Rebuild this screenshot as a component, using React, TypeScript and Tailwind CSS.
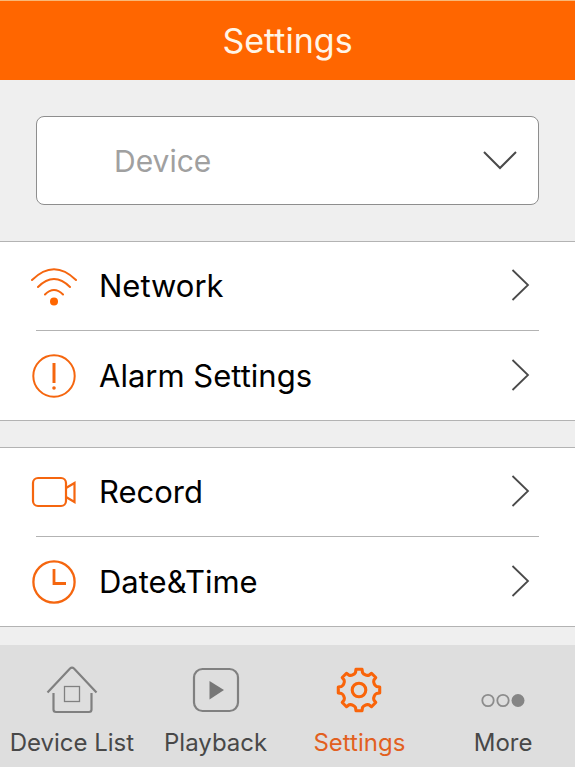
import type { ReactNode } from 'react';

const TOOTH_ANGLES = [0, 45, 90, 135, 180, 225, 270, 315];

function rotated(x: number, y: number, degrees: number) {
  const a = (degrees * Math.PI) / 180;
  const px = x * Math.cos(a) - y * Math.sin(a);
  const py = x * Math.sin(a) + y * Math.cos(a);
  return `${px.toFixed(2)} ${py.toFixed(2)}`;
}

// Each tooth is a flat cap, followed by a rounded valley leading to the next one.
const GEAR_PATH =
  TOOTH_ANGLES.map((angle, i) =>
    [
      `${i === 0 ? 'M' : 'L'}${rotated(-3, -20.7, angle)}`,
      `L${rotated(3, -20.7, angle)}`,
      `L${rotated(3.5, -17.5, angle)}`,
      `Q${rotated(4.4, -15.8, angle)} ${rotated(6.3, -15.2, angle)}`,
      `Q${rotated(-4.4, -15.8, angle + 45)} ${rotated(-3.5, -17.5, angle + 45)}`,
    ].join(' '),
  ).join(' ') + 'Z';

function WifiIcon() {
  return (
    <svg viewBox="0 0 48 48" className="size-12 shrink-0" fill="none" stroke="#f5660f" strokeWidth="2" strokeLinecap="round" aria-hidden="true">
      <path d="M2 18Q24-3.5 46 18M8 25Q24 9 40 25M15 32.5Q24 23.5 33 32.5" />
      <circle cx="24" cy="39.5" r="4" fill="#ff6600" stroke="none" />
    </svg>
  );
}

function AlarmIcon() {
  return (
    <svg viewBox="0 0 48 48" className="size-12 shrink-0" fill="none" stroke="#f5660f" strokeWidth="2" aria-hidden="true">
      <circle cx="24" cy="24" r="20.7" />
      <path d="M24 11V31" strokeWidth="3" />
      <circle cx="24" cy="36" r="1.8" fill="#f5660f" stroke="none" />
    </svg>
  );
}

function RecordIcon() {
  return (
    <svg viewBox="0 0 48 48" className="size-12 shrink-0" fill="none" stroke="#f5660f" strokeWidth="2.2" aria-hidden="true">
      <rect x="3" y="10" width="33" height="28" rx="5" />
      <path d="M36 20L44.5 15V34L36 29" />
    </svg>
  );
}

function ClockIcon() {
  return (
    <svg viewBox="0 0 48 48" className="size-12 shrink-0" fill="none" stroke="#f5660f" strokeWidth="2.3" aria-hidden="true">
      <circle cx="24" cy="24" r="20.6" />
      <path d="M24 11V25.5H36" strokeWidth="2.8" />
    </svg>
  );
}

function HomeIcon() {
  return (
    <svg viewBox="0 0 52 48" className="h-12 w-13" fill="none" stroke="#808080" strokeWidth="2.2" aria-hidden="true">
      <path d="M1.5 26.5L24 2.5Q26 .8 28 2.5L50.5 26.5" />
      <path d="M7.5 27V43.5Q7.5 46 10 46H43Q45.5 46 45.5 43.5V27" />
      <rect x="18.5" y="20.5" width="15" height="15" strokeWidth="1.3" />
    </svg>
  );
}

function PlaybackIcon() {
  return (
    <svg viewBox="0 0 48 48" className="size-12" fill="none" stroke="#808080" strokeWidth="2.2" aria-hidden="true">
      <rect x="2" y="3" width="44" height="42" rx="8.5" />
      <path d="M17.5 15L32 24L17.5 33.5Z" fill="#777777" stroke="none" />
    </svg>
  );
}

function GearIcon() {
  return (
    <svg viewBox="-24 -24 48 48" className="size-12" fill="none" stroke="#f9640a" strokeWidth="3.1" strokeLinejoin="round" aria-hidden="true">
      <path d={GEAR_PATH} />
      <circle r="6.8" />
    </svg>
  );
}

function MoreIcon() {
  return (
    <svg viewBox="0 0 48 48" className="size-12" fill="none" stroke="#8c8c8c" strokeWidth="1.8" aria-hidden="true">
      <circle cx="9" cy="34.5" r="5.7" />
      <circle cx="24" cy="34.5" r="5.7" />
      <circle cx="39" cy="34.5" r="6.5" fill="#858585" stroke="none" />
    </svg>
  );
}

function SettingRow({ icon, label }: { icon: ReactNode; label: string }) {
  return (
    <li className="px-9 not-last:[&>button]:border-b">
      <button type="button" className="flex h-[89px] w-full items-center border-[#b3b3b3] text-left">
        <span className="-ml-1.5 mr-[21px]">{icon}</span>
        <span className="grow text-[31px] leading-10 text-black">{label}</span>
        <svg viewBox="0 0 20 34" className="mr-[9px] h-[34px] w-5" fill="none" stroke="#4a4a4a" strokeWidth="1.8" aria-hidden="true">
          <path d="M2.5 1L18 16L2.5 31" />
        </svg>
      </button>
    </li>
  );
}

function Tab({ icon, label, active = false }: { icon: ReactNode; label: string; active?: boolean }) {
  return (
    <button
      type="button"
      aria-current={active ? 'page' : undefined}
      className={`flex flex-col items-center gap-[15px] whitespace-nowrap text-2xl leading-7 ${active ? 'text-[#e2601f]' : 'text-[#484848]'}`}
    >
      {icon}
      <span>{label}</span>
    </button>
  );
}

export default function App() {
  return (
    <div className="flex min-h-screen flex-col bg-white pr-px pb-px font-[Inter,'Liberation_Sans',sans-serif]">
      <header className="flex h-20 items-center justify-center border-t border-[#f8b878] bg-[#ff6600]">
        <h1 className="text-[34px] leading-10 text-[#fff5e8]">Settings</h1>
      </header>
      <main className="flex grow flex-col bg-[#efefef]">
        <div className="relative mx-9 my-9">
          <select
            aria-label="Device"
            defaultValue=""
            className="h-[89px] w-full appearance-none rounded-lg border border-[#8e8e8e] bg-white px-[77px] pt-0.5 text-[30px] text-[#a0a0a0]"
          >
            <option value="">Device</option>
          </select>
          <svg viewBox="0 0 36 20" className="pointer-events-none absolute top-1/2 right-[21px] h-5 w-9 -translate-y-1/2" fill="none" stroke="#4a4a4a" strokeWidth="2" aria-hidden="true">
            <path d="M2 1L18 17L34 1" />
          </svg>
        </div>
        <ul className="border-y border-[#b3b3b3] bg-white">
          <SettingRow icon={<WifiIcon />} label="Network" />
          <SettingRow icon={<AlarmIcon />} label="Alarm Settings" />
        </ul>
        <ul className="mt-[26px] mb-[18px] border-y border-[#b3b3b3] bg-white">
          <SettingRow icon={<RecordIcon />} label="Record" />
          <SettingRow icon={<ClockIcon />} label="Date&Time" />
        </ul>
      </main>
      <nav className="grid grid-cols-4 bg-[#dedede] pt-[21px] pb-2.5">
        <Tab icon={<HomeIcon />} label="Device List" />
        <Tab icon={<PlaybackIcon />} label="Playback" />
        <Tab icon={<GearIcon />} label="Settings" active />
        <Tab icon={<MoreIcon />} label="More" />
      </nav>
    </div>
  );
}
